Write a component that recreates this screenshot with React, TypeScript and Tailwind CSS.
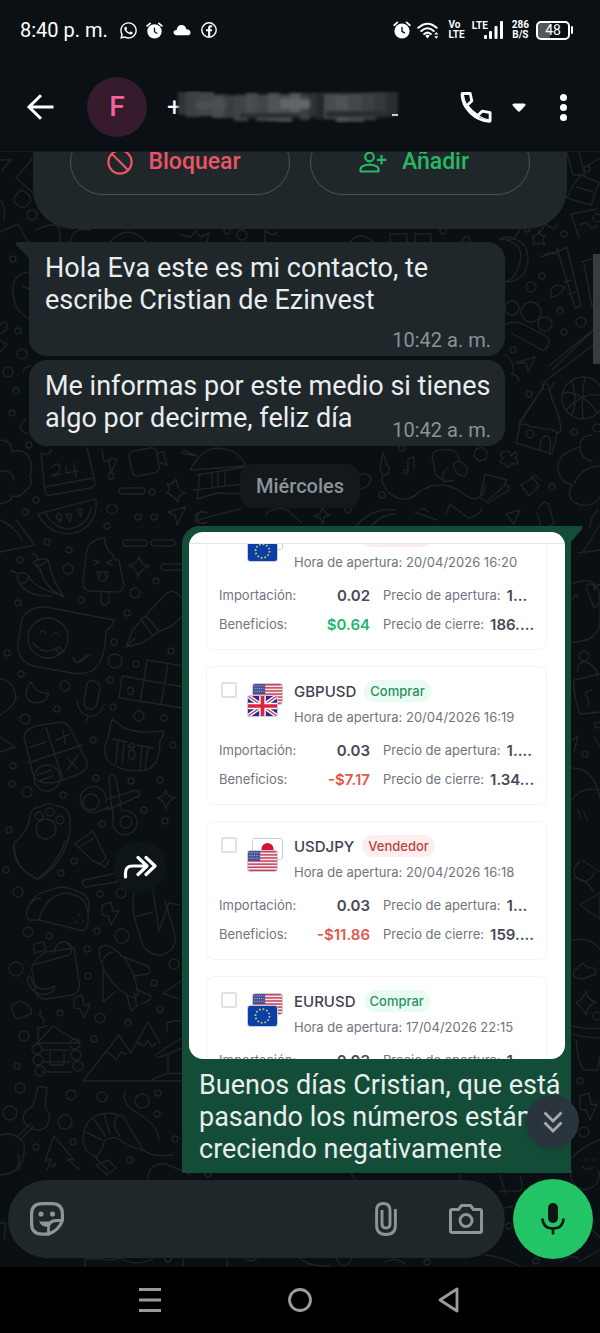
import type { ReactNode } from "react";
import { FaWhatsapp } from "react-icons/fa";

/* ---------- wallpaper ---------- */

const dots: [number, number, number][] = [
  [47, 542, 3], [69, 550, 3], [107, 526, 3], [20, 560, 3], [68, 569, 5], [81, 600, 3], [18, 603, 3], [156, 581, 3],
  [135, 593, 5], [127, 613, 3], [114, 642, 3], [115, 661, 7], [136, 664, 3], [7, 653, 3], [21, 674, 3], [65, 686, 5],
  [110, 680, 3], [57, 709, 3], [25, 719, 5], [113, 707, 3], [139, 716, 5], [164, 718, 3], [171, 651, 3], [93, 740, 3],
  [173, 745, 3], [13, 766, 3], [12, 784, 3], [27, 792, 5], [63, 795, 3], [96, 778, 3], [131, 781, 3], [160, 780, 3],
  [144, 810, 3], [102, 824, 3], [165, 821, 3], [9, 830, 3], [74, 861, 3], [61, 873, 3], [18, 892, 5], [6, 870, 3],
  [100, 894, 3], [121, 893, 5], [28, 932, 5], [49, 936, 3], [97, 931, 3], [122, 936, 7], [16, 969, 7], [87, 949, 3],
  [88, 976, 3], [154, 983, 3], [174, 964, 5], [60, 1013, 3], [100, 1018, 5], [160, 1009, 3], [128, 1023, 3],
  [24, 1036, 5], [94, 1039, 3], [17, 1066, 3], [20, 1088, 5], [71, 1095, 5], [102, 1097, 5], [142, 1101, 7],
  [10, 1113, 7], [65, 1122, 7], [157, 1114, 3], [158, 1093, 3], [73, 1142, 3], [36, 1147, 3], [175, 1139, 3],
  [130, 1160, 3], [564, 234, 3], [542, 276, 3], [531, 287, 5], [560, 311, 3], [581, 322, 5], [564, 332, 3],
  [513, 350, 3], [529, 394, 3], [574, 432, 3], [597, 428, 4], [552, 487, 3], [382, 495, 3], [348, 510, 3],
  [402, 448, 3], [512, 308, 7], [531, 312, 10], [545, 324, 7], [587, 169, 3], [527, 229, 3], [597, 218, 4],
  [13, 259, 3], [18, 331, 3], [22, 354, 5], [8, 372, 5], [16, 391, 3], [12, 413, 3], [29, 445, 3], [36, 500, 3],
  [25, 512, 3], [111, 476, 3], [152, 492, 3], [112, 509, 5], [138, 517, 3], [154, 517, 3], [32, 215, 5],
  [242, 235, 5], [227, 231, 3], [443, 231, 3], [584, 656, 5], [585, 754, 3], [598, 725, 3], [580, 1081, 3],
  [584, 1132, 5], [597, 1016, 4], [509, 1226, 3], [427, 1262, 3], [536, 1261, 3], [168, 1259, 3], [208, 1174, 3],
];

const doodles = [
  // ice lolly
  "M83 582L87 549Q92 538 105 538Q104 548 113 555Q113 561 119 560L124 585Q123 592 116 592L90 591Q83 590 83 582ZM101 592v10q4 6 8 0v-10M93 560l6 2-5 3M112 560l-6 3 6 2M97 572l11 0q0 9-5 9t-6-9M100 572v4M105 572v4",
  // dashes and sparkle
  "M126 540h18a3 3 0 0 1 0 6h-18a3 3 0 0 1 0-6ZM154 540h18a3 3 0 0 1 0 6h-18a3 3 0 0 1 0-6ZM182 564h-18a3 3 0 0 0 0 6h18M139 557q2 8 10 9q-9 3-11 11q-1-8-9-12q9-1 10-8Z",
  // chillies
  "M33 563q4-6 15-3q4 20 16 37q-18-7-24-28ZM33 563q6 6 15-3M38 561q0-6-6-8M18 574q4-3 10 1q6 14 34 20M17 577q6 20 34 19M11 571q6 1 8 5M22 583q6 0 6-7",
  // chat bubble with a face
  "M18 644L22 619Q28 606 46 607L114 620Q114 625 106 631Q105 662 93 670Q86 675 72 673L33 666Q17 660 18 644ZM68 638a20 20 0 1 1-40 0a20 20 0 1 1 40 0ZM40 633q2-5 6 0M53 635q2-5 6 0M33 643q12 14 26 4l5 5M55 648l4 6 4-3M73 658l4 5 10-8M80 662l10-7",
  // fountain pen
  "M146 615l18-19q7-8 14-2l5 5M157 631q12 0 26-16M141 619l5-3 13 15-6 5ZM141 621l-8 8-7 18 16-4 12-8M127 646l8-8",
  // arrows and moon
  "M31 682q-10 13 0 20q14 4 18-9q-12 2-18-11ZM0 679q12 0 16 18q0 8-16 18M0 737l15 10-15 5",
  // microphone
  "M87 684q1-4 7-3q6 1 6 7l-3 16q-2 6-8 5q-6-2-5-8ZM77 701q2 13 12 15t15-11M88 716l-2 6",
  // crossword
  "M147 660l36 6M122 676l61 11M120 698l63 10M147 660l-7 42M168 663l-7 42M122 676l-3 22M128 689q2-4 5 0v5q-6 2-5-3",
  // calculator
  "M24 737q0-7 12-11l24-4q8 0 11 8l16 32q2 7-8 12l-22 8q-20 4-24-8ZM46 728l17 52M28 763l54-18M30 747l16-5M63 730l2 14M56 740l14-6M66 757l12 12M78 755l-10 14M60 778a13 13 0 1 1-26 0a13 13 0 1 1 26 0ZM37 775l14-5M39 781l14-5",
  // cat face
  "M112 719l12 9q14 5 27 4l13-1q-2 8-4 10q0 24-14 29q-20 3-34-6q-12-8-4-26ZM113 739l14 3M118 741l-2 22M124 742l-2 22M137 745l16 3M142 747l-2 22M148 747l-3 22M128 746q4-5 7 0q-3 4-7 0ZM129 752q2-4 6 0q0 8-4 8q-3-1-2-8Z",
  // scissors
  "M109 777q4-5 7 2l6 32M109 777l3 34M108 799l28-9q6 2 3 6l-32 14M106 802a13 13 0 1 0-5 8l8-3M99 802a8 8 0 1 1-16 0a8 8 0 1 1 16 0ZM122 811a12 12 0 1 1-9 12v-13M132 822a6 6 0 1 1-12 0a6 6 0 1 1 12 0Z",
  "M166 790q2 8 9 8q-8 3-9 11q-2-9-9-11q7-1 9-8Z",
  // paw
  "M14 850v-7q16-14 16-28q2-8 10-8q8-6 15-1q15 0 15 15q1 22-12 40q-8 12-20 18Q14 868 14 850M56 829a10 10 0 1 1-20 0a10 10 0 1 1 20 0ZM43 816a4 4 0 1 1-8 0a4 4 0 1 1 8 0ZM54 812a4 4 0 1 1-8 0a4 4 0 1 1 8 0ZM64 820a4 4 0 1 1-8 0a4 4 0 1 1 8 0Z",
  "M75 844l18-13 13 27-6 6-7-3ZM79 847l15-9M100 864l5 3 4-6",
  // taco
  "M39 920q6-24 26-27q22 2 23 20q1 14-4 18ZM39 920l-10 0q-6-6 2-18q6-10 20-12q10-6 26 1q14 4 12 20M27 911q2-12 14-13M79 914v2M76 921v2M83 920v2",
  // stick and bolts
  "M84 880l33-7v9l-32 5q-5-4-1-7ZM102 905l9-3 2 10 6-1-8 14-3-9-6-1ZM74 998l8-3 2 10 6-1-6 14-4-9-6-1Z",
  // tool
  "M135 890q-4 12 0 30l8 26q8 10 18 9q16-4 14-20l-10-34M135 917l18-5M153 890l6 41 10-28 10 2",
  // picnic jar
  "M32 970q-2-8 14-18l28-4 5 34q2 10-6 13l-27 4q-8 0-10-6ZM33 965l36-10M34 944l10-2 2 8-12 3ZM54 954q2-14 12-12q7 3 5 12M27 978q4 18 20 16q8-2 8-8q-14 8-23-4q0-6-3-6ZM12 1005l7-4 8 3q6 6 4 10l-14 5q-6-6-5-14Z",
  // rocket
  "M99 950q2-6 10-4q24 12 29 48q-2 6-11 1q-26-18-28-45ZM103 961q2-8 10-9M121 956l26 10q6 4 1 8l-14 2M103 968v34l12-10M127 996l4 15 6-5-3-13M138 990l13 6q0 5-10 8",
  "M163 993l20-13M163 993l16 6",
  // cabin
  "M37 1043l16-17 27 17ZM38 1040v-12l9-2M41 1011q-3 4 1 6t1 7M42 1050h28M42 1062h28M42 1072h30M50 1050h14v15H50ZM42 1049a5 5 0 1 1-10 0a5 5 0 1 1 10 0ZM43 1060a5 5 0 1 1-10 0a5 5 0 1 1 10 0ZM45 1071a5 5 0 1 1-10 0a5 5 0 1 1 10 0ZM80 1044a5 5 0 1 1-10 0a5 5 0 1 1 10 0ZM81 1055a5 5 0 1 1-10 0a5 5 0 1 1 10 0ZM83 1066a5 5 0 1 1-10 0a5 5 0 1 1 10 0Z",
  // mountains
  "M83 1081h100M83 1081l36-46 12 18 17-31 12 21M106 1052l6 3 4 5 5-8 5 2M138 1043l6 3 4-5 4 6 4-4M155 1055l28-18M157 1058l26-10M167 1032v-8q2-4 16-3M168 1054v20M151 1081q14-10 32-7",
  // key
  "M38 1086l9 2-2 20q8 6 2 18q-8 8-20 0q-10-12 6-20ZM17 1137l14-14M20 1140l14-14M0 1135q16-4 24 8q2 12-6 28",
  // prawn
  "M83 1141q0-28 28-28l12 3 20 34q-12-2-26-12q-14-2-14 9l-6 10q-12-4-14-16ZM94 1119l12 18M104 1114l6 20M86 1132l16 8M118 1116q-8 8 2 20M96 1158l12 12M125 1091q-4 12 12 22q22 12 22 28M143 1150q10 8 30 5",
  // tree
  "M54 1136l-9 25 6-2-4 11M54 1136l20 24-7-1 12 10M51 1165q4 4 4-2",
  // shield
  "M14 846q2 24 23 33q20-14 28-38",
  // lower edge
  "M148 1179q0-16 18-15l24 10M96 1165l12-5 8 8-9 7ZM0 1175q24-2 18-20M0 1223h6l-2 16M16 1238l30 20 14-6M85 1266v-7h17M102 1258q2 4 18 0M120 1258q16 10 34 0M183 1266v-9M227 1266v-9M244 1258q8 6 14-1",
  // calendar, bolt, camcorder, bungalow
  "M41 453l4 39q2 4 6 3l40-7q4-2 4-6l-8-34M41 453q8 4 10-3M45 487l48-9M52 467q6-6 8 0q0 6-8 9l10-2M66 467v6l12-2M74 463l2 14",
  "M102 450l2 12 6-2-1 3 2 10 6-14-7 0M129 456q0-4 5-5l16-3q6-1 7 4l2 16q-1 4-5 5l-16 3q-5 0-6-5ZM157 454l6-3 4 14-7-2",
  "M190 470q12-22 28-22q22 2 28 18ZM196 475l50-8M194 490l56-7M197 499l20-6 30 1M200 474l-3 24M212 474v14M218 472v14M225 471v14M183 450l14 6M181 453l16 3",
  "M176 479q-5 7-9 5q4 6 0 9q6 2 11 9q0-8 7-9q-8-3-9-14ZM122 488h20a3 3 0 0 1 0 6h-20a3 3 0 0 1 0-6ZM168 512l18-5-9 18-2-10Z",
  "M195 521q20-6 45-12M195 516q4-6 12-3a6 6 0 1 0 0 9q-10 4-12-6M266 515q4-8 20-6l16 14",
  "M38 514l58-15q2 30-26 35q-22 0-32-20ZM45 512q8 16 24 17 20-4 22-22M56 516l4 6 2-6-3-3ZM66 514l4 8 2-8ZM77 510l4 7 1-8Z",
  // flower on the left
  "M0 440q12 0 12 12q10-4 16 4t2 20q4 8-4 14q-6 8-14 6q0 6-12 8M0 472q12-4 14 8M0 520q12 4 22 20M0 552l35-7-18-24",
  // left column upper doodles
  "M0 160l11 0-9 10M16 178l16-19M16 178l30 26M22 190q-8 4-8 12q8 8 12 4q8-4 2-12ZM0 232l18-8 10 18M36 230q20-10 24 0v14M0 200q6 6 4 20",
  "M13 294q-2-20 16-22M13 294q2 18 18 26M22 286l7 3M0 325q6-6 7 0t-7 8M0 340l7 4-7 8M23 372q2-6 8-6M25 420q-10 8 2 14",
  // between the contact card and the first bubble
  "M70 242q4-16 20-12M110 242q18-20 36 0M181 235l10 2 4-6 6 6 8-4-2 9M265 242v-12q8 8 12 2M350 242q10-12 24 0M390 242v-8h17v8M415 242v-8h16v8M462 242q6-12 8 0",
  // cards and fish at the upper right
  "M567 153l6 22h12l-6-22M573 185l8-10 18 8-8 22-24-7ZM577 187l16 5M587 166l13-8M571 214l26-5M571 214l8 24M580 225l6-3 5 6 6-2M540 232l6-8q8 8 12 0",
  "M539 230q0 6 6 6q-4 4 0 9l-6-2-6 2q2-6-1-9q6 0 7-6Z",
  // pumpkin
  "M500 240q28-6 28 20q-2 22-24 22M506 240q18 4 14 22t-16 20M500 239q6-4 14-1l6-8",
  // bamboo
  "M541 257l20-7q8-4 6-2l14 58-6 2-18-60M564 282l7-2M568 294l7-2M560 256q-10-6-18 1M565 287q-16-6-14 10q8 0 14-10M582 262q8-4 18-2M584 264l8 42 8-2M552 370l48-46M544 382l56-42M549 366l51-42",
  // bone, paper plane
  "M505 325q10-6 20 0l22 12q4 4 0 10t-8 1l-28-15M516 363l19-6-7 15-2-9ZM505 355q10 6 8 20M510 374q8 0 9 7",
  // basketball
  "M604 398a21 21 0 1 1-42 0a21 21 0 1 1 42 0ZM563 392q20 0 34 20M572 381q6 20 0 34M585 377q-4 20-2 42M566 410q18-20 36-14",
  // bird house
  "M519 423l24-36M543 387q2-6 5-2l4 14q8 16 9 32q-4 4-6 0l-6-2-6 0-6-2-6 0-6-3-6 1ZM520 425l-4 18 36 11 5-20M534 434a4 4 0 1 1-8 0a4 4 0 1 1 8 0ZM540 450q0-14 6-14t4 16M544 390l-2-8M550 390l4-8",
  // blossoms and cross
  "M580 447q0-12 12-12M580 447q-22 6-22 20t14 18q-8 14 8 20q14 2 20-8M580 447q0 12 12 14M574 484q8-18 26-18M505 452q4-4 6 4l4-4q4 2 0 6q4 2 2 6l-6 0q-4 6-6 0q-6 0-4-4q4-2 0-4q-2-4 4-4Z",
  "M476 449l6-2 5 5-1 7-7 2-5-5Z",
  // music note, wizard and cards
  "M408 471v-12l6-2v11M408 472a2 2 0 1 1-4 0a2 2 0 1 1 4 0ZM383 453l5 14M383 453l-3 16q4 6 2 12q6 18 24 18q10-2 14-8q20-12 40 0q20 18 26-6M386 465a5 5 0 1 1-4 10M433 462q-4-14 12-12q14-2 14 12M434 462q0 18 12 18M455 470q-4-10 6-8q10 6 4 14-8 0-10-6ZM448 468q-8 6-4 14l10-2M446 514l4-10 18 14q12-2 14-10M485 474l21 6-2 7M485 474l-5 24 8 5 22-14-4-5M488 500l14-12M521 485l12-7 6 8-10 10ZM531 478q4-6 8 1M355 528q14-20 40-18M370 528q10-14 26-14M415 512l22 8M420 510q4-4 8 2M322 508q4 6 8 7l-6 2-1 7-3-6-6-2 6-2ZM506 514l14-4-6 14ZM539 508l4-6q6 0 6 4l5 18-12 5-5-16M360 475q8-4 11 4q-2 8-10 10M590 528q0-10 8-18",
  // right strip beside the photo
  "M583 552l17-28M578 553l22-3M572 600q4-10 6-2M572 584q28-12 28 20v20q-4 18-28 18M588 592q-4-8 2-8t4 6q4-8 8-4M588 592l6 16 6-6M578 672q-2-10 8-10q10 4 12 14M574 680l26-6M574 680q-2 10 6 34l20-2M592 690q-8 0-6 6q4 4 2 10M572 740l6-4-4 16M595 738l5 10M572 768q22 0 28 30M572 800q8-14 28-10M578 810l3 8M584 812l3 8",
  "M582 860l18 12M574 878q12 0 20 14M580 905l20-12v26ZM572 940q20-4 28 10M580 862a10 10 0 1 0 14 10",
  "M574 977q-2-8 4-9q4-8 10 0q8-2 8 6l-14 5ZM586 991q2 10 10 11q-8 3-10 13q-4-8-10-12q8-4 10-12ZM572 1026q18 4 28 2M572 1034q14 4 28 4M576 1040q2 24 8 30h14l2-14M580 1096l9-3 2 12 6-1-7 16-4-10-6-1Z",
  "M572 1158q10-12 28-18M598 1170a14 14 0 1 1-26 0M582 1166q4 6 10 2M585 1160h2M593 1160h2",
  // strips around the message field
  "M355 1180l-4-7M460 1175v6M500 1175l6 20M520 1177q4 10 0 14l-20 0M505 1208l8-2M300 1258q6 8 30 8M336 1258q8 16 16 0M385 1262q10-6 20 2M485 1255q20 2 36 12M595 1222l-8 2 13 14M578 1262l22-12M560 1262q10-8 18-4",
];

function Wallpaper() {
  return (
    <svg
      className="absolute inset-0 h-full w-full"
      viewBox="0 152 600 1115"
      preserveAspectRatio="xMidYMin slice"
      fill="none"
      stroke="#1d2326"
      strokeWidth="1.4"
      strokeLinecap="round"
      strokeLinejoin="round"
      aria-hidden="true"
    >
      {dots.map(([x, y, r]) => (
        <circle key={`${x}-${y}`} cx={x} cy={y} r={r} />
      ))}
      {doodles.map((d) => (
        <path key={d} d={d} />
      ))}
    </svg>
  );
}

/* ---------- status bar ---------- */

function Alarm({ className }: { className: string }) {
  return (
    <svg className={className} viewBox="0 0 18 18" aria-hidden="true">
      <circle cx="9" cy="10" r="7.6" fill="#fff" />
      <path d="M1.2 4.2 4.4 1.4M16.8 4.2 13.6 1.4" stroke="#fff" strokeWidth="1.8" strokeLinecap="round" />
      <path d="M9 6.5v3.8l2.400 1.600" stroke="#0a0f13" strokeWidth="1.400" fill="none" strokeLinecap="round" />
    </svg>
  );
}

function StatusBar() {
  return (
    <div className="flex h-[60px] items-center justify-between pr-[27px] pl-5 text-white">
      <div className="flex items-center">
        <span className="text-[20px]">8:40 p. m.</span>
        <FaWhatsapp className="ml-[11px] size-[19px]" />
        <Alarm className="ml-2 size-[17px]" />
        <svg className="ml-2.5 h-3 w-[18px]" viewBox="0 0 18 12" aria-hidden="true">
          <path d="M3 11.200Q.5 11 .5 8.600T3.600 6Q4.500 1 8.500 1t4.800 4.300q4.200.2 4.200 3.200 0 2.700-2.500 2.700Z" fill="#fff" />
        </svg>
        <svg className="ml-2.5 size-4" viewBox="0 0 16 16" aria-hidden="true">
          <circle cx="8" cy="8" r="7.200" fill="none" stroke="#fff" strokeWidth="1.400" />
          <path d="M7.100 14.500V9.300H5V7.200h2.100V5.700Q7.100 3.300 9.500 3.300h1.600v2H9.900q-.7 0-.7.8v1.100h1.900l-.3 2.100H9.200v5.200Z" fill="#fff" />
        </svg>
      </div>
      <div className="flex items-center">
        <Alarm className="size-[18px]" />
        <svg className="ml-1.5 h-[17px] w-[22px]" viewBox="0 0 22 17" fill="none" stroke="#fff" aria-hidden="true">
          <path d="M1.300 5.800Q10.500-2.400 19.700 5.800M4.300 9Q10.500 3.600 16.700 9M7.200 12q3.300-2.800 6.600 0" strokeWidth="2" strokeLinecap="round" />
          <path d="M10.500 16.500 8.200 13.400q2.300-1.200 4.600 0Z" fill="#fff" stroke="none" />
          <path d="M19.300 10l2 2.600h-4ZM19.300 16.800l2-2.600h-4Z" fill="#fff" stroke="none" />
        </svg>
        <span className="ml-2.5 text-[10px] leading-[10px] font-bold">
          Vo
          <br />
          LTE
        </span>
        <span className="ml-[7px] self-start text-[10px] leading-[12px] font-bold">LTE</span>
        <svg className="-ml-1 h-[18px] w-[19px]" viewBox="0 0 19 18" fill="#fff" aria-hidden="true">
          <rect x="0" y="14" width="3" height="4" rx="1" />
          <rect x="5" y="10" width="3" height="8" rx="1" />
          <rect x="10.500" y="5" width="3" height="13" rx="1" />
          <rect x="16" y="0" width="3" height="18" rx="1" />
        </svg>
        <span className="ml-[9px] text-center text-[10px] leading-[10px] font-bold">
          286
          <br />
          B/S
        </span>
        <span className="ml-[7px] flex items-center gap-px">
          <span className="flex h-[19px] w-[34px] items-center justify-center rounded-[5px] border-2 border-white bg-linear-to-r from-[#55585b] from-40% to-transparent to-40% text-[14px] leading-none">
            48
          </span>
          <span className="h-2 w-0.5 rounded-full bg-white" />
        </span>
      </div>
    </div>
  );
}

/* ---------- app bar ---------- */

const smudge: [number, number, number, number, string][] = [
  [2, 1, 12, 22, "#303437"], [10, 0, 14, 26, "#3d4043"], [22, 1, 16, 24, "#434649"], [36, 4, 14, 23, "#484b4d"],
  [48, 5, 12, 22, "#3a3d40"], [58, 4, 14, 26, "#404346"], [70, 2, 12, 24, "#4a4d4f"], [80, 4, 14, 26, "#434649"],
  [92, 2, 12, 28, "#505355"], [102, 4, 14, 27, "#4a4d4f"], [114, 2, 12, 25, "#575a5c"], [124, 3, 10, 26, "#3c3f42"],
  [132, 2, 10, 20, "#2f3336"], [140, 4, 10, 24, "#24282b"], [148, 3, 14, 25, "#484b4d"], [160, 4, 14, 27, "#505355"],
  [172, 3, 16, 28, "#454849"], [186, 2, 14, 27, "#3d4043"], [198, 1, 14, 24, "#36393c"], [210, 1, 12, 24, "#2a2e31"],
  [104, 8, 30, 10, "#636567"], [64, 22, 60, 5, "#2b2f32"], [20, 10, 30, 8, "#4c4f52"], [150, 20, 60, 6, "#292d30"],
];

function Smudge() {
  return (
    <svg className="relative h-8 w-[226px] shrink-0" viewBox="0 0 226 32" aria-hidden="true">
      <g style={{ filter: "blur(1.5px)" }}>
        <path d="M3 2 60 4 130 2 221 1V24Q190 30 150 27T90 26L4 24Z" fill="#2b2f32" />
        {smudge.map(([x, y, w, h, fill]) => (
          <rect key={`${x}-${y}-${w}`} x={x} y={y} width={w} height={h} fill={fill} />
        ))}
      </g>
      <path d="M216 23h6v2h-6z" fill="#c9cccd" />
    </svg>
  );
}

function AppBar() {
  return (
    <div className="flex h-[91px] items-center pt-[3px] pr-[33px] pl-[26px] text-white">
      <button type="button" aria-label="Atrás">
        <svg className="block h-[26px] w-7" viewBox="0 0 28 26" fill="none" stroke="#fff" strokeWidth="3" aria-hidden="true">
          <path d="M27.500 13H3M15 1.200 3 13l12 11.800" />
        </svg>
      </button>
      <span className="ml-[33px] flex size-[60px] shrink-0 items-center justify-center rounded-full bg-[#351b2b] text-[28px] font-medium text-[#f0659a]">
        F
      </span>
      <div className="ml-5 flex min-w-0 flex-1 items-center">
        <span className="-mr-1.5 text-[26px] leading-8">+</span>
        <Smudge />
      </div>
      <button type="button" aria-label="Llamar" className="flex items-center gap-5">
        <svg className="h-[31px] w-8" viewBox="0 0 32 31" fill="none" stroke="#fff" strokeWidth="2.800" strokeLinejoin="round" aria-hidden="true">
          <path d="M2.800 1.500h7.400l1.600 7.500-4.900 4.500Q11.600 20 17.900 23.600l4.400-4.500 7.800 1.600v8q0 .6-.6.6Q19 28.800 10.700 21 2 12.400 2 2.300 2 1.500 2.800 1.500Z" />
          <path d="M6.900 13.500Q4 8 3.400 3M17.900 23.600q5 3.200 11.500 4.600" strokeWidth="1.200" />
        </svg>
        <svg className="h-[9px] w-3.5" viewBox="0 0 14 9" aria-hidden="true">
          <path d="M1.500 1h11q1 .6.400 1.400L8 7.800q-1 .8-2 0L1.100 2.400Q.5 1.600 1.500 1Z" fill="#fff" stroke="#fff" />
        </svg>
      </button>
      <button type="button" aria-label="Más opciones" className="ml-[34px] flex flex-col gap-[3px]">
        <span className="size-[7px] rounded-full bg-white" />
        <span className="size-[7px] rounded-full bg-white" />
        <span className="size-[7px] rounded-full bg-white" />
      </button>
    </div>
  );
}

/* ---------- contact card ---------- */

function ContactCard() {
  return (
    <div className="mx-[33px] -mt-8 flex gap-5 rounded-b-[40px] bg-[#1f272a] px-[37px] pt-[9px] pb-[34px] text-[23px] font-medium">
      <button type="button" className="flex h-[66px] flex-1 items-center justify-center gap-[15px] rounded-full border border-[#4a5154] pr-3 text-[#ea5566]">
        <svg className="size-[26px]" viewBox="0 0 26 26" fill="none" stroke="currentColor" strokeWidth="2.200" aria-hidden="true">
          <circle cx="13" cy="13" r="11.600" />
          <path d="m5 5 16 16" />
        </svg>
        Bloquear
      </button>
      <button type="button" className="flex h-[66px] flex-1 items-center justify-center gap-[15px] rounded-full border border-[#4a5154] pr-3 text-[#26b864]">
        <svg className="h-[22px] w-7" viewBox="0 0 28 22" fill="none" stroke="currentColor" strokeWidth="2.200" strokeLinejoin="round" aria-hidden="true">
          <circle cx="10.500" cy="6" r="4.300" />
          <path d="M1.500 20.500v-2.300q0-2 2-3 7-3.200 14 0 2 1 2 3v2.300ZM22.500 4v9.500M17.800 8.800h9.500" />
        </svg>
        Añadir
      </button>
    </div>
  );
}

/* ---------- bubbles ---------- */

function Incoming({ text, time, tail, inline }: { text: string; time: string; tail?: boolean; inline?: boolean }) {
  return (
    <div
      className={`relative mr-[95px] ml-[29px] bg-[#1f272a] pt-2.5 pr-3 pb-1 pl-4 ${tail ? "rounded-[18px] rounded-tl-none" : "rounded-[18px]"}`}
    >
      {tail && (
        <svg className="absolute top-0 -left-3.5 h-4 w-3.5" viewBox="0 0 14 16" fill="#1f272a" aria-hidden="true">
          <path d="M14 0v16L1 3Q-.5 0 3 0Z" />
        </svg>
      )}
      <p className="text-[27px] leading-8 text-[#e9edef]">{text}</p>
      <time className={`block pr-0.5 text-right text-[20px] leading-6 text-[#8b9397] ${inline ? "-mt-4" : "mt-3"}`}>{time}</time>
    </div>
  );
}

/* ---------- shared trading screen ---------- */

type FlagName = "us" | "eu" | "gb" | "jp";

const flagArt: Record<FlagName, ReactNode> = {
  us: (
    <>
      <rect width="31" height="22" fill="#f6e9ec" />
      {[0, 3.4, 6.8, 10.2, 13.6, 17, 20.4].map((y) => (
        <rect key={y} y={y} width="31" height="1.700" fill="#c9455f" />
      ))}
      <rect width="13" height="11" fill="#4a5296" />
      {[2, 5, 8].map((y) => (
        <path key={y} d={`M1.500 ${y}h10.500`} stroke="#c3c8e4" strokeDasharray="1 1.500" />
      ))}
    </>
  ),
  eu: (
    <>
      <rect width="31" height="22" fill="#0b3fa8" />
      <circle cx="15.500" cy="11" r="7.500" fill="none" stroke="#d9cf5c" strokeWidth="1.800" strokeDasharray="1.800 2.120" />
    </>
  ),
  gb: (
    <>
      <rect width="31" height="22" fill="#1d2f94" />
      <path d="M0 0l31 22M31 0 0 22" stroke="#fff" strokeWidth="4.500" />
      <path d="M0 0l31 22M31 0 0 22" stroke="#d8324a" strokeWidth="1.500" />
      <path d="M15.500 0v22M0 11h31" stroke="#fff" strokeWidth="7" />
      <path d="M15.500 0v22M0 11h31" stroke="#dc2440" strokeWidth="4" />
    </>
  ),
  jp: (
    <>
      <rect width="31" height="22" fill="#fff" />
      <circle cx="15.500" cy="11" r="6.500" fill="#d5123c" />
    </>
  ),
};

function Flag({ name, className }: { name: FlagName; className: string }) {
  return (
    <svg className={`absolute h-[22px] w-[31px] rounded-[3px] border border-[#c9ccd3] ${className}`} viewBox="0 0 31 22" preserveAspectRatio="none" aria-hidden="true">
      {flagArt[name]}
    </svg>
  );
}

interface Position {
  pair: string;
  side: "Comprar" | "Vendedor";
  opened: string;
  amount: string;
  open: string;
  result?: { profit: string; close: string };
  front: FlagName;
  back: FlagName;
}

const positions: Position[] = [
  { pair: "EURJPY", side: "Vendedor", opened: "20/04/2026 16:20", amount: "0.02", open: "1...", result: { profit: "$0.64", close: "186...." }, front: "eu", back: "jp" },
  { pair: "GBPUSD", side: "Comprar", opened: "20/04/2026 16:19", amount: "0.03", open: "1....", result: { profit: "-$7.17", close: "1.34..." }, front: "gb", back: "us" },
  { pair: "USDJPY", side: "Vendedor", opened: "20/04/2026 16:18", amount: "0.03", open: "1...", result: { profit: "-$11.86", close: "159...." }, front: "us", back: "jp" },
  { pair: "EURUSD", side: "Comprar", opened: "17/04/2026 22:15", amount: "0.03", open: "1...", front: "eu", back: "us" },
];

function PositionCard({ p }: { p: Position }) {
  return (
    <div className="h-[139px] rounded-lg border border-[#f3f3f6] px-3 pt-3 text-[13px] leading-[29px] text-[#70747f]">
      <div className="flex h-[51px]">
        <input
          type="checkbox"
          aria-label={p.pair}
          className="mt-[3px] ml-0.5 size-4 shrink-0 appearance-none rounded-[2px] border-2 border-[#dfe1e7] bg-white"
        />
        <div className="relative mt-1 ml-2.5 h-[34px] w-9 shrink-0">
          <Flag name={p.back} className="top-0 right-0" />
          <Flag name={p.front} className="bottom-0 left-0" />
        </div>
        <div className="ml-[11px]">
          <div className="flex h-6 items-center gap-2">
            <span className="text-[15px] font-medium text-[#3f4351]">{p.pair}</span>
            <span
              className={`rounded-full px-1.5 text-[13px] leading-[22px] font-medium ${
                p.side === "Comprar" ? "bg-[#e9fcf1] text-[#2f8f62]" : "bg-[#fdeeee] text-[#b8433c]"
              }`}
            >
              {p.side}
            </span>
          </div>
          <div className="leading-7 whitespace-nowrap">Hora de apertura: {p.opened}</div>
        </div>
      </div>
      <div className="mt-[6px] grid grid-cols-[151px_1fr] gap-x-[13px] whitespace-nowrap">
        <div className="flex justify-between">
          Importación:<b className="text-[15px] font-semibold text-[#464a58]">{p.amount}</b>
        </div>
        <div className="flex gap-1.5">
          Precio de apertura:<b className="text-[15px] font-semibold text-[#464a58]">{p.open}</b>
        </div>
        {p.result && (
          <>
            <div className="flex justify-between">
              Beneficios:
              <b className={`text-[15px] font-semibold ${p.result.profit.startsWith("-") ? "text-[#e2574c]" : "text-[#22b573]"}`}>
                {p.result.profit}
              </b>
            </div>
            <div className="flex gap-1.5">
              Precio de cierre:<b className="text-[15px] font-semibold text-[#464a58]">{p.result.close}</b>
            </div>
          </>
        )}
      </div>
    </div>
  );
}

function SharedScreen() {
  return (
    <div className="h-[527px] overflow-hidden rounded-[14px] bg-white font-['Inter',sans-serif]">
      <div className="h-3 border-b border-[#e3e3e7]" />
      <div className="h-[515px] overflow-hidden">
        <div className="mr-[18px] ml-[17px] -mt-[33px] flex flex-col gap-4">
          {positions.map((p) => (
            <PositionCard key={p.pair} p={p} />
          ))}
        </div>
      </div>
    </div>
  );
}

function Outgoing() {
  return (
    <div className="mt-[18px] flex items-center justify-end gap-4 pr-[29px]">
      <button type="button" aria-label="Reenviar" className="mt-[34px] flex size-[52px] shrink-0 items-center justify-center rounded-full bg-[#0d1519]">
        <svg className="h-6 w-[34px]" viewBox="0 0 34 24" fill="none" stroke="#fff" strokeWidth="3.200" strokeLinecap="round" aria-hidden="true">
          <path d="M2.500 22V18q0-7 7-7h14M15 2.500 24 11l-9 8.500M23 2.500 32 11l-9 8.500" strokeLinejoin="round" />
        </svg>
      </button>
      <div className="relative w-[389px] rounded-tl-[18px] bg-[#144d37] pt-1.5 pr-1.5 pb-2 pl-[7px]">
        <svg className="absolute top-0 -right-3 h-4 w-3" viewBox="0 0 12 16" fill="#144d37" aria-hidden="true">
          <path d="M0 0v16L11 3Q12.500 0 10 0Z" />
        </svg>
        <SharedScreen />
        <p className="mt-2.5 pl-2.5 text-[27px] leading-8 text-[#e9edef]">
          Buenos días Cristian, que está pasando los números están creciendo negativamente
        </p>
        <button type="button" aria-label="Ir al final" className="absolute -right-2 bottom-[25px] flex size-[53px] items-center justify-center rounded-full bg-[#2a343c] shadow-md">
          <svg className="h-[22px] w-5" viewBox="0 0 20 22" fill="none" stroke="#a3abb0" strokeWidth="2.800" aria-hidden="true">
            <path d="m1.500 1.500 8.500 8.500 8.500-8.500M1.500 11.500 10 20l8.500-8.500" />
          </svg>
        </button>
      </div>
    </div>
  );
}

/* ---------- composer ---------- */

function Composer() {
  return (
    <form className="relative flex items-center gap-2 pt-1.5 pr-[7px] pb-2 pl-2" onSubmit={(e) => e.preventDefault()}>
      <div className="flex h-[78px] min-w-0 flex-1 items-center rounded-full bg-[#1f272a] pr-[22px] pl-[22px] text-[#8d9598]">
        <button type="button" aria-label="Stickers">
          <svg className="block size-[34px]" viewBox="0 0 34 34" fill="none" stroke="currentColor" strokeWidth="3.200" strokeLinejoin="round" aria-hidden="true">
            <path d="M18.500 32.200H12q-10.400 0-10.400-10.400V12Q1.600 1.600 12 1.600h10Q32.400 1.600 32.400 12v6.500Q29 28 18.500 32.200Z" />
            <path d="M18.500 32v-5.500q0-8 8-8h5.500" strokeWidth="2.800" />
            <circle cx="11" cy="12" r="2.600" fill="currentColor" stroke="none" />
            <circle cx="22.500" cy="12" r="2.600" fill="currentColor" stroke="none" />
            <path d="M9 19.500h13q-3 2-3.500 5.500Q11.500 25 9 19.500Z" fill="currentColor" stroke="none" />
          </svg>
        </button>
        <input type="text" aria-label="Mensaje" className="h-full min-w-0 flex-1 bg-transparent px-4 text-[27px] text-[#e9edef] outline-none" />
        <button type="button" aria-label="Adjuntar">
          <svg className="block h-[34px] w-[22px]" viewBox="0 0 22 34" fill="none" stroke="currentColor" strokeWidth="2.900" aria-hidden="true">
            <path d="M20.400 7v16.500q0 9-9.400 9t-9.400-9V8.500q0-7 6.700-7t6.700 7V22q0 4-4 4t-4-4V8" />
          </svg>
        </button>
        <button type="button" aria-label="Cámara" className="ml-[52px]">
          <svg className="block h-[30px] w-[34px]" viewBox="0 0 34 30" fill="none" stroke="currentColor" strokeWidth="3" strokeLinejoin="round" aria-hidden="true">
            <path d="M3 5.500h6.500l3-4h9l3 4H31q1.500 0 1.500 1.500v20q0 1.500-1.500 1.500H3q-1.500 0-1.500-1.500V7Q1.500 5.500 3 5.500Z" />
            <circle cx="17" cy="16.500" r="6" />
          </svg>
        </button>
      </div>
      <button type="button" aria-label="Grabar mensaje de voz" className="flex size-20 shrink-0 items-center justify-center rounded-full bg-[#23c465]">
        <svg className="h-8 w-6" viewBox="0 0 24 32" fill="none" aria-hidden="true">
          <rect x="7" y="0" width="10" height="20" rx="5" fill="#0a1712" />
          <path d="M1.500 15.500Q2 25.500 12 25.500t10.500-10M12 25v6.500" stroke="#0a1712" strokeWidth="2.600" />
        </svg>
      </button>
    </form>
  );
}

function NavBar() {
  return (
    <nav className="flex h-[66px] items-center justify-between bg-black px-[138px] text-[#9b9b9b]">
      <button type="button" aria-label="Recientes">
        <svg className="block size-6" viewBox="0 0 24 24" stroke="currentColor" strokeWidth="3" aria-hidden="true">
          <path d="M1 1.500h22M1 12h22M1 22.500h22" />
        </svg>
      </button>
      <button type="button" aria-label="Inicio">
        <svg className="block size-6" viewBox="0 0 24 24" fill="none" stroke="currentColor" strokeWidth="2.800" aria-hidden="true">
          <circle cx="12" cy="12" r="10.500" />
        </svg>
      </button>
      <button type="button" aria-label="Volver">
        <svg className="block h-[26px] w-6" viewBox="0 0 24 26" fill="none" stroke="currentColor" strokeWidth="2.800" strokeLinejoin="round" aria-hidden="true">
          <path d="M19 2v22L2 13Z" />
        </svg>
      </button>
    </nav>
  );
}

export default function App() {
  return (
    <div className="flex min-h-screen flex-col bg-[#0a0f13] font-['Roboto',sans-serif]">
      <header className="relative z-10 border-b border-[#11171a] bg-[#0b1014]">
        <StatusBar />
        <AppBar />
      </header>
      <div className="relative flex flex-1 flex-col">
        <Wallpaper />
        <main className="relative flex-1 overflow-hidden">
          <ContactCard />
          <div className="mt-[13px] flex flex-col gap-1">
            <Incoming tail text="Hola Eva este es mi contacto, te escribe Cristian de Ezinvest" time="10:42 a. m." />
            <Incoming inline text="Me informas por este medio si tienes algo por decirme, feliz día" time="10:42 a. m." />
          </div>
          <div className="mt-[18px] flex justify-center">
            <span className="rounded-[14px] bg-[#12181b] px-4 text-[20px] leading-[44px] font-medium text-[#8b9397]">Miércoles</span>
          </div>
          <Outgoing />
          <span className="absolute top-[102px] right-0 h-[110px] w-[7px] bg-[#353b3f]" />
        </main>
        <Composer />
      </div>
      <NavBar />
    </div>
  );
}
